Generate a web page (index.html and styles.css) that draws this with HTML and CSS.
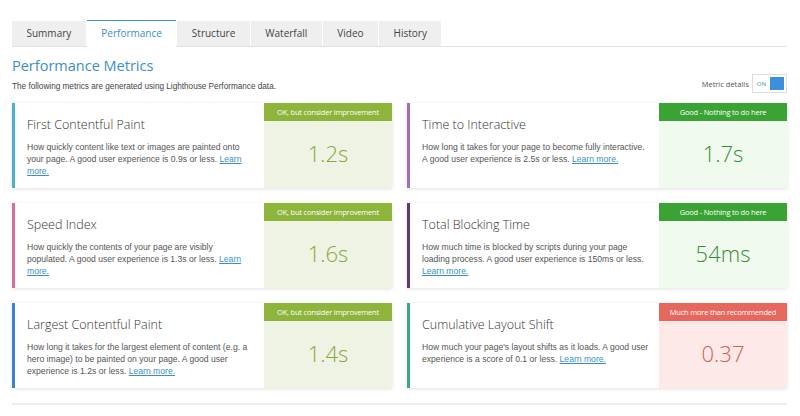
FILE: index.html
```html
<!DOCTYPE html>
<html lang="en">
<head>
    <meta charset="UTF-8">
    <meta name="viewport" content="width=device-width, initial-scale=1.0">
    <title>Performance</title>
    <link rel="stylesheet" href="styles.css">
</head>
<body>
    <div class="page">
        <ul class="tabs">
            <li>Summary</li>
            <li class="active">Performance</li>
            <li>Structure</li>
            <li>Waterfall</li>
            <li>Video</li>
            <li>History</li>
        </ul>

        <div class="head">
            <div>
                <h1>Performance Metrics</h1>
                <p class="lead">The following metrics are generated using Lighthouse Performance data.</p>
            </div>
            <div class="toggle">
                <span>Metric details</span>
                <span class="switch"><span class="on">ON</span><span class="knob"></span></span>
            </div>
        </div>

        <div class="metrics">
            <div class="card fcp">
                <div class="info">
                    <h2>First Contentful Paint</h2>
                    <p>How quickly content like text or images are painted onto your page. A good user experience is 0.9s or less. <a href="#">Learn more.</a></p>
                </div>
                <div class="score ok">
                    <div class="label">OK, but consider improvement</div>
                    <div class="value">1.2s</div>
                </div>
            </div>
            <div class="card tti">
                <div class="info">
                    <h2>Time to Interactive</h2>
                    <p>How long it takes for your page to become fully interactive. A good user experience is 2.5s or less. <a href="#">Learn more.</a></p>
                </div>
                <div class="score good">
                    <div class="label">Good - Nothing to do here</div>
                    <div class="value">1.7s</div>
                </div>
            </div>
            <div class="card si">
                <div class="info">
                    <h2>Speed Index</h2>
                    <p>How quickly the contents of your page are visibly populated. A good user experience is 1.3s or less. <a href="#">Learn more.</a></p>
                </div>
                <div class="score ok">
                    <div class="label">OK, but consider improvement</div>
                    <div class="value">1.6s</div>
                </div>
            </div>
            <div class="card tbt">
                <div class="info">
                    <h2>Total Blocking Time</h2>
                    <p>How much time is blocked by scripts during your page loading process. A good user experience is 150ms or less. <a href="#">Learn more.</a></p>
                </div>
                <div class="score good">
                    <div class="label">Good - Nothing to do here</div>
                    <div class="value">54ms</div>
                </div>
            </div>
            <div class="card lcp">
                <div class="info">
                    <h2>Largest Contentful Paint</h2>
                    <p>How long it takes for the largest element of content (e.g. a hero image) to be painted on your page. A good user experience is 1.2s or less. <a href="#">Learn more.</a></p>
                </div>
                <div class="score ok">
                    <div class="label">OK, but consider improvement</div>
                    <div class="value">1.4s</div>
                </div>
            </div>
            <div class="card cls">
                <div class="info">
                    <h2>Cumulative Layout Shift</h2>
                    <p>How much your page's layout shifts as it loads. A good user experience is a score of 0.1 or less. <a href="#">Learn more.</a></p>
                </div>
                <div class="score bad">
                    <div class="label">Much more than recommended</div>
                    <div class="value">0.37</div>
                </div>
            </div>
        </div>

        <div class="rule"></div>
    </div>
</body>
</html>
```

FILE: styles.css
```css
body {
    margin: 0;
    background: #fff;
    color: #444;
    font-family: "Open Sans", sans-serif;
}
.page {
    padding: 20px 13px 0 12px;
}
.tabs {
    display: flex;
    margin: 0;
    padding: 0;
    list-style: none;
    border-bottom: 1px solid #e2e2e2;
}
.tabs li {
    height: 25px;
    line-height: 25px;
    margin-top: 1px;
    margin-right: 1px;
    margin-bottom: -1px;
    padding: 0 14.5px;
    background: #efefef;
    border-bottom: 1px solid #e2e2e2;
    font-size: 10px;
    color: #444;
}
.tabs li.active {
    margin-top: 0;
    background: #fff;
    border-top: 1px solid #3a8fc4;
    border-bottom-color: #fff;
    color: #3a8fc4;
}
.head {
    display: flex;
    justify-content: space-between;
    align-items: flex-end;
}
h1 {
    margin: 9px 0 0;
    font-size: 14.5px;
    font-weight: 400;
    color: #3a8fc4;
}
.lead {
    margin: 7px 0 0;
    font-family: "Liberation Sans", Arial, sans-serif;
    font-size: 8.2px;
    color: #444;
}
.toggle {
    display: flex;
    align-items: center;
    gap: 3px;
    font-size: 7.5px;
    color: #555;
    margin-bottom: -2px;
}
.switch {
    display: flex;
    align-items: center;
    gap: 4px;
    padding: 2px;
    border: 1px solid #ddd;
}
.switch .on {
    font-size: 6px;
    color: #3a8fc4;
    padding-left: 2px;
}
.switch .knob {
    width: 14px;
    height: 13px;
    background: #3a90db;
}
.metrics {
    display: grid;
    grid-template-columns: 1fr 1fr;
    gap: 15px;
    margin-top: 12px;
}
.card {
    display: flex;
    height: 85px;
    border-left: 3px solid #4ab0da;
    box-shadow: 0 1px 4px rgba(0, 0, 0, 0.12);
}
.card.tti { border-left-color: #a46cbd; }
.card.si { border-left-color: #d56f9f; }
.card.tbt { border-left-color: #5a3d6c; }
.card.lcp { border-left-color: #3f7fcf; }
.card.cls { border-left-color: #3aa989; }
.info {
    flex: 1;
    padding: 13px 10px 0 12px;
}
h2 {
    margin: 0 0 8px;
    font-size: 12.5px;
    font-weight: 300;
    color: #333;
}
.info p {
    margin: 0;
    font-family: "Liberation Sans", Arial, sans-serif;
    font-size: 8.6px;
    line-height: 12px;
    color: #555;
}
.info a {
    color: #3a8fc4;
}
.score {
    display: flex;
    flex-direction: column;
    width: 128px;
}
.score .label {
    height: 18px;
    line-height: 18px;
    text-align: center;
    font-size: 7.5px;
    letter-spacing: -0.2px;
    color: #fff;
}
.score .value {
    flex: 1;
    display: flex;
    align-items: center;
    justify-content: center;
    padding-bottom: 4px;
    font-size: 22px;
    font-weight: 300;
}
.ok .label { background: #8db43b; }
.ok .value { background: #eef3e3; color: #87a83f; }
.good .label { background: #3aa333; }
.good .value { background: #f1faef; color: #3b8b36; }
.bad .label { background: #e8675d; }
.bad .value { background: #fde9e8; color: #cf6058; }
.rule {
    margin-top: 15px;
    border-top: 2px solid #ececec;
}
```
